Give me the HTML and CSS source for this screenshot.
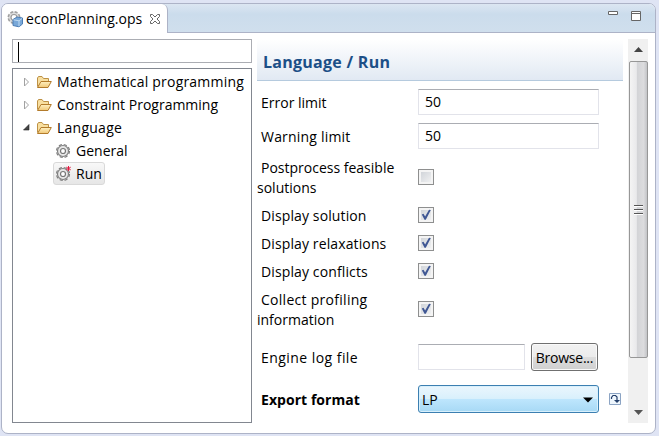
FILE: index.html
```html
<!DOCTYPE html>
<html lang="en">
<head>
<meta charset="utf-8">
<title>econPlanning.ops</title>
<link rel="stylesheet" href="styles.css">
</head>
<body>
<svg width="0" height="0" class="defs">
  <defs>
    <linearGradient id="fold" x1="0" y1="0" x2="0" y2="1"><stop offset="0" stop-color="#fff0c0"/><stop offset="1" stop-color="#f0c878"/></linearGradient>
    <symbol id="folder" viewBox="0 0 16 14">
      <path d="M1.5 11.5V3l1-1.500h3.500l1.500 2h5v3" fill="#f8dfa0" stroke="#bd9145"/>
      <path d="M1.500 12.500l3.500-6h10.300l-3.300 6z" fill="url(#fold)" stroke="#b37b2b"/>
    </symbol>
    <symbol id="gear" viewBox="0 0 16 16">
      <circle cx="8" cy="8" r="6.500" fill="none" stroke="#808080" stroke-width="1.200" stroke-dasharray="3.200 1.905"/>
      <circle cx="8" cy="8" r="5.500" fill="#e6e6e6" stroke="#808080" stroke-width="1.200"/>
      <circle cx="8" cy="8" r="2.500" fill="#fff" stroke="#777" stroke-width="1.200"/>
    </symbol>
    <symbol id="check" viewBox="0 0 12 12"><path d="M1.800 5.500L3.500 4.800l1.600 2.600L9 .800l1.800.300L5.800 10.800H4.500z" fill="#3f5794"/></symbol>
    <symbol id="closed" viewBox="0 0 9 10"><path d="M2.500 1v8L6.500 5z" fill="#fff" stroke="#a2a2a2"/></symbol>
  </defs>
</svg>
<main class="view">
  <header class="tabbar">
    <div class="tab">
      <svg class="tab-icon" width="17" height="17" viewBox="0 0 17 17">
        <circle cx="7" cy="6.500" r="5.700" fill="#dedede" stroke="#a0a0a0" stroke-width="1.600" stroke-dasharray="3 1.477"/>
        <circle cx="7" cy="6.500" r="3" fill="#fff" stroke="#999" stroke-width="1.200"/>
        <path d="M6 8.500l4-2.500 5.500 1v6L12 15.800 6 14.500z" fill="#79a8d8" stroke="#4b7db5"/>
        <path d="M6.500 8.800l5.500 1v5.500M12 9.800l3-2.300" fill="none" stroke="#c7e0f5" stroke-width=".9"/>
      </svg>
      <span class="tab-title">econPlanning.ops</span>
      <svg class="close" width="12" height="12" viewBox="0 0 12 12"><path d="M1.500 1.500h2L6 4l2.500-2.500h2v2L8 6l2.500 2.500v2h-2L6 8l-2.500 2.500h-2v-2L4 6 1.500 3.500z" fill="#fff" stroke="#666"/></svg>
    </div>
    <div class="tools">
      <svg width="34" height="10" viewBox="0 0 34 10"><path d="M.5.5h9v3h-9zM23.500.500h9v9h-9zM23.500 2.500h9" fill="#fff" stroke="#666"/></svg>
    </div>
  </header>
  <div class="content">
    <aside class="side">
      <div class="search"><i class="caret"></i></div>
      <div class="tree">
        <div class="node"><svg class="arrow"><use href="#closed"/></svg><svg class="folder"><use href="#folder"/></svg><span class="t-math">Mathematical programming</span></div>
        <div class="node"><svg class="arrow"><use href="#closed"/></svg><svg class="folder"><use href="#folder"/></svg><span>Constraint Programming</span></div>
        <div class="node"><svg class="arrow" viewBox="0 0 9 10"><path d="M7 1.500V7H1.500z" fill="#444" stroke="#222" stroke-width=".6"/></svg><svg class="folder"><use href="#folder"/></svg><span class="t-lang">Language</span></div>
        <div class="node leaf"><svg class="gear"><use href="#gear"/></svg><span>General</span></div>
        <div class="node leaf selected"><svg class="gear" viewBox="0 0 16 16"><use href="#gear"/><path d="M13.500 0v5M11.300 1.200l4.400 2.600M15.700 1.200l-4.400 2.600" stroke="#e3173f" stroke-width="1"/></svg><span>Run</span></div>
      </div>
    </aside>
    <section class="form">
      <h1><span>Language / Run</span></h1>
      <div class="row"><label>Error limit</label><div class="field wide">50</div></div>
      <div class="row"><label class="l-warn">Warning limit</label><div class="field wide">50</div></div>
      <div class="row tall"><label class="multi"><span class="first">Postprocess feasible</span><br>solutions</label><div class="box"></div></div>
      <div class="row short"><label class="l-disp">Display solution</label><div class="box"><svg><use href="#check"/></svg></div></div>
      <div class="row short"><label class="l-disp">Display relaxations</label><div class="box"><svg><use href="#check"/></svg></div></div>
      <div class="row short"><label class="l-disp">Display conflicts</label><div class="box"><svg><use href="#check"/></svg></div></div>
      <div class="row tall"><label class="multi"><span class="first l-coll">Collect profiling</span><br>information</label><div class="box"><svg><use href="#check"/></svg></div></div>
      <div class="row tall"><label class="l-log">Engine log file</label><div class="field log"></div><div class="button">Browse...</div></div>
      <div class="row last"><label class="bold">Export format</label>
        <div class="select"><span>LP</span><svg width="10" height="6" viewBox="0 0 10 6"><path d="M0 .5h10L5 5.500z" fill="#000"/></svg></div>
        <svg class="reset" width="12" height="12" viewBox="0 0 12 12"><path d="M.5.500h11v11H.500z" fill="#eef6fd" stroke="#8ca4c4"/><path d="M2.500 6V4.500l1.500-2h2.500L8 4v4.500" fill="none" stroke="#243f6b" stroke-width="1.200"/><path d="M5 7h6L8 10z" fill="#243f6b"/></svg>
      </div>
    </section>
    <div class="scrollbar">
      <svg class="up" width="9" height="5" viewBox="0 0 9 5"><path d="M4.500 0L9 5H0z" fill="#444"/></svg>
      <div class="thumb"><i></i><i></i><i></i></div>
      <svg class="down" width="9" height="5" viewBox="0 0 9 5"><path d="M0 0h9L4.500 5z" fill="#555"/></svg>
    </div>
  </div>
</main>
</body>
</html>
```
FILE: styles.css
```css
* { box-sizing: border-box; }
html, body { margin: 0; height: 100%; }
body {
  padding: 3px 3px 2px 1px;
  background: #dfe4f4;
  font: 14px/20px "Open Sans", "Noto Sans", sans-serif;
  color: #000;
  overflow: hidden;
  white-space: nowrap;
}
.defs { position: absolute; }
svg { display: block; flex: none; }
.view {
  width: 655px;
  height: 431px;
  border: 1px solid #adb3c7;
  border-radius: 7px;
  background: #fff;
  overflow: hidden;
}
.tabbar {
  display: flex;
  justify-content: space-between;
  height: 29px;
  background: linear-gradient(#dce6f2, #cbdcec 35%, #d0dfed);
}
.tab {
  display: flex;
  align-items: center;
  width: 166px;
  padding-left: 5px;
  background: #fff;
  border-right: 1px solid #adb3c7;
  border-radius: 0 6px 0 0;
}
.tab-title { width: 116px; margin: 1px 0 0 2px; letter-spacing: .05px; }
.tab-icon { margin-top: 2px; }
.close { margin: 1px 0 0 7px; }
.tools {
  flex: 1;
  display: flex;
  justify-content: flex-end;
  padding: 7px 13px 0 0;
  border-bottom: 1px solid #adb3c7;
}
.content { display: flex; padding: 6px 0 0 10px; }
.side { width: 240px; }
.search { height: 24px; border: 1px solid #abadb3; padding: 2px 5px; }
.caret { display: block; width: 1px; height: 20px; background: #000; }
.tree { height: 355px; margin-top: 5px; padding-top: 1px; border: 1px solid #828790; }
.node { display: flex; align-items: center; height: 23px; padding-left: 9px; }
.arrow { width: 9px; height: 10px; }
.folder { width: 16px; height: 14px; margin: 0 5px 0 5px; }
.t-math { letter-spacing: .2px; }
.t-lang { letter-spacing: .25px; }
.leaf { margin-left: 40px; padding-left: 2px; }
.gear { width: 16px; height: 16px; margin-right: 5px; }
.selected {
  width: 52px;
  border: 1px solid #d9d9d9;
  border-radius: 3px;
  background: linear-gradient(#f8f8f8, #e6e6e6);
  padding-left: 1px;
}
.form { width: 366px; margin-left: 5px; }
h1 {
  height: 42px;
  margin: 0 0 4px;
  padding: 11px 0 0 6px;
  border-bottom: 1px solid #b5cade;
  background: linear-gradient(#fff, #e1e9f3);
  font-size: 16px;
  line-height: 24px;
  letter-spacing: .27px;
  color: #1c4f87;
}
.row { display: flex; align-items: center; height: 34px; }
.tall { height: 48px; }
.short { height: 28px; }
.last { height: 36px; }
label { width: 161px; padding: 2px 0 0 4px; }
.multi { padding: 1px 0 0; }
.first { margin-left: 4px; }
.bold { font-weight: 700; letter-spacing: .05px; }
.l-warn { letter-spacing: .2px; }
.l-disp { letter-spacing: .12px; }
.l-coll { letter-spacing: .28px; }
.l-log { letter-spacing: .45px; }
.field {
  height: 26px;
  padding: 2px 6px;
  border: 1px solid #e2e3ea;
  border-top-color: #abadb3;
}
.wide { width: 181px; }
.log { width: 107px; }
.box {
  width: 16px;
  height: 16px;
  padding: 1px;
  border: 1px solid #8e8f8f;
  background: linear-gradient(135deg, #cbcfd5, #f6f6f6);
  box-shadow: inset 0 0 0 2px #f4f4f4;
}
.box svg { width: 12px; height: 12px; }
.button {
  width: 67px;
  height: 28px;
  margin-left: 6px;
  padding-top: 1px;
  border: 1px solid #707070;
  border-radius: 3px;
  background: linear-gradient(#f2f2f2, #ebebeb 50%, #dddddd 50%, #cfcfcf);
  box-shadow: inset 0 0 0 1px #fafafa;
  line-height: 25px;
  letter-spacing: -.25px;
  text-align: center;
}
.select {
  display: flex;
  align-items: center;
  justify-content: space-between;
  width: 181px;
  height: 28px;
  padding: 1px 5px 0 3px;
  border: 1px solid #3c7fb1;
  border-radius: 3px;
  background: linear-gradient(#eaf6fd, #d9f0fc 48%, #bee6fd 50%, #a7d9f5);
  box-shadow: inset 0 0 0 1px #d8f0fc;
}
.reset { margin-left: 10px; }
.scrollbar {
  display: flex;
  flex-direction: column;
  align-items: center;
  width: 20px;
  height: 384px;
  margin-left: 5px;
  background: #f0f0f0;
}
.up { margin: 8px 0 9px; }
.thumb {
  display: flex;
  flex-direction: column;
  align-items: center;
  justify-content: center;
  gap: 2px;
  width: 19px;
  height: 297px;
  border: 1px solid #979797;
  border-radius: 2px;
  background: linear-gradient(90deg, #f4f4f4, #e9e9eb 38%, #d2d3d6 40%, #dcdcde 80%, #c3c4c7);
}
.thumb i { width: 9px; height: 2px; border-top: 1px solid #555; background: #fff; }
.down { margin-top: 52px; }
```
